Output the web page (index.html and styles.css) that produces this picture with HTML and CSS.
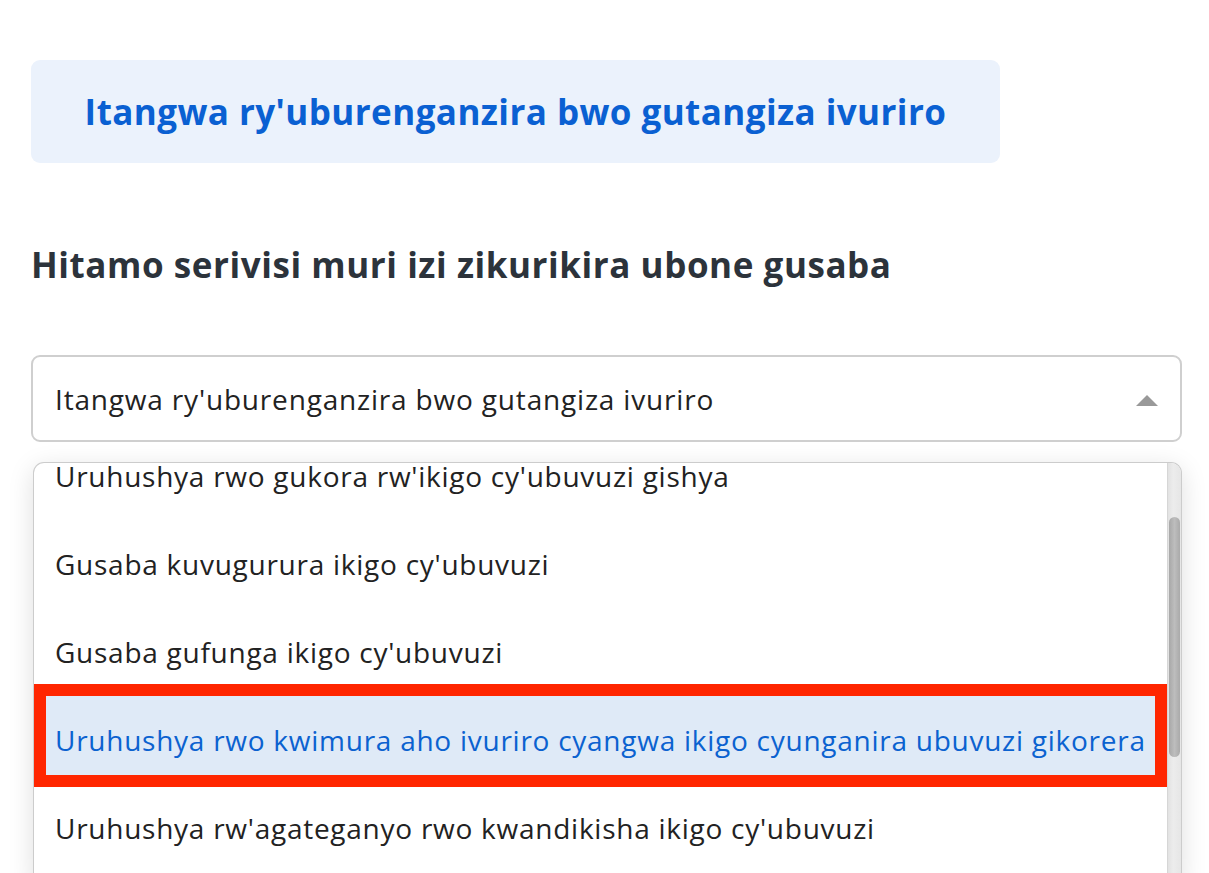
FILE: index.html
```html
<!DOCTYPE html>
<html lang="rw">
<head>
<meta charset="utf-8">
<title>Serivisi</title>
<link rel="stylesheet" href="styles.css">
</head>
<body>
<main class="page">
  <div class="banner">
    <h1 class="banner-title">Itangwa ry'uburenganzira bwo gutangiza ivuriro</h1>
  </div>
  <h2 class="section-title">Hitamo serivisi muri izi zikurikira ubone gusaba</h2>
  <div class="select-wrap">
    <div class="select">
      <span class="select-value">Itangwa ry'uburenganzira bwo gutangiza ivuriro</span>
      <span class="caret"></span>
    </div>
    <div class="menu">
      <div class="menu-scroll">
        <ul class="options">
          <li class="option">Uruhushya rwo gukora rw'ikigo cy'ubuvuzi gishya</li>
          <li class="option">Gusaba kuvugurura ikigo cy'ubuvuzi</li>
          <li class="option">Gusaba gufunga ikigo cy'ubuvuzi</li>
          <li class="option option-active">Uruhushya rwo kwimura aho ivuriro cyangwa ikigo cyunganira ubuvuzi gikorera<span class="mark"></span></li>
          <li class="option">Uruhushya rw'agateganyo rwo kwandikisha ikigo cy'ubuvuzi</li>
        </ul>
      </div>
      <div class="scrollbar"><div class="thumb"></div></div>
    </div>
  </div>
</main>
</body>
</html>
```
FILE: styles.css
```css
* { box-sizing: border-box; }
html, body { margin: 0; padding: 0; background: #ffffff; }
body {
  font-family: "Open Sans", "Noto Sans", "Liberation Sans", sans-serif;
  color: #222222;
  overflow: hidden;
  height: 873px;
}
.page {
  padding: 60px 27px 0 31px;
}
.banner {
  width: 969px;
  height: 103px;
  background: #ebf2fc;
  border-radius: 9px;
  display: flex;
  align-items: center;
  justify-content: center;
}
.banner-title {
  margin: 0;
  font-size: 35px;
  font-weight: 700;
  color: #0a60d2;
  letter-spacing: 0.43px;
}
.section-title {
  margin: 76px 0 0 0;
  font-size: 35px;
  line-height: 52px;
  font-weight: 700;
  color: #2c333b;
  letter-spacing: 0.56px;
}
.select-wrap {
  margin-top: 64px;
}
.select {
  height: 87px;
  border: 2px solid #cfcfcf;
  border-radius: 9px;
  display: flex;
  align-items: center;
  justify-content: space-between;
  padding: 0 22px 0 22px;
}
.select-value {
  font-size: 28px;
  letter-spacing: 0.82px;
  color: #222222;
}
.caret {
  width: 0;
  height: 0;
  border-left: 11px solid transparent;
  border-right: 11px solid transparent;
  border-bottom: 11px solid #999999;
  margin-top: 4px;
}
.menu {
  margin: 20px 0 0 2px;
  height: 420px;
  border: 1px solid #cccccc;
  border-bottom: 0;
  border-radius: 11px 11px 0 0;
  overflow: hidden;
  display: flex;
  box-shadow: 0 6px 26px rgba(0, 0, 0, 0.13);
  background: #ffffff;
}
.menu-scroll {
  flex: 1;
  overflow: hidden;
}
.options {
  list-style: none;
  margin: -31px 0 0 0;
  padding: 0;
}
.option {
  position: relative;
  height: 88px;
  display: flex;
  align-items: center;
  padding-left: 21px;
  font-size: 28px;
  letter-spacing: 0.74px;
  color: #222222;
  white-space: nowrap;
}
.option-active {
  background: #dfeaf7;
  color: #0b62d0;
}
.mark {
  position: absolute;
  top: -12px;
  bottom: -3px;
  left: 0;
  right: 0;
  border: 12px solid #ff2600;
}
.scrollbar {
  width: 14px;
  background: linear-gradient(to right, #e2e2e2, #ececec 40%, #e6e6e6);
  border-left: 1px solid #d6d6d6;
  padding-top: 54px;
  display: flex;
  justify-content: center;
}
.thumb {
  width: 11px;
  height: 240px;
  border-radius: 6px;
  background: linear-gradient(to right, #a8a8a8, #bdbdbd 50%, #aaaaaa);
}
```
